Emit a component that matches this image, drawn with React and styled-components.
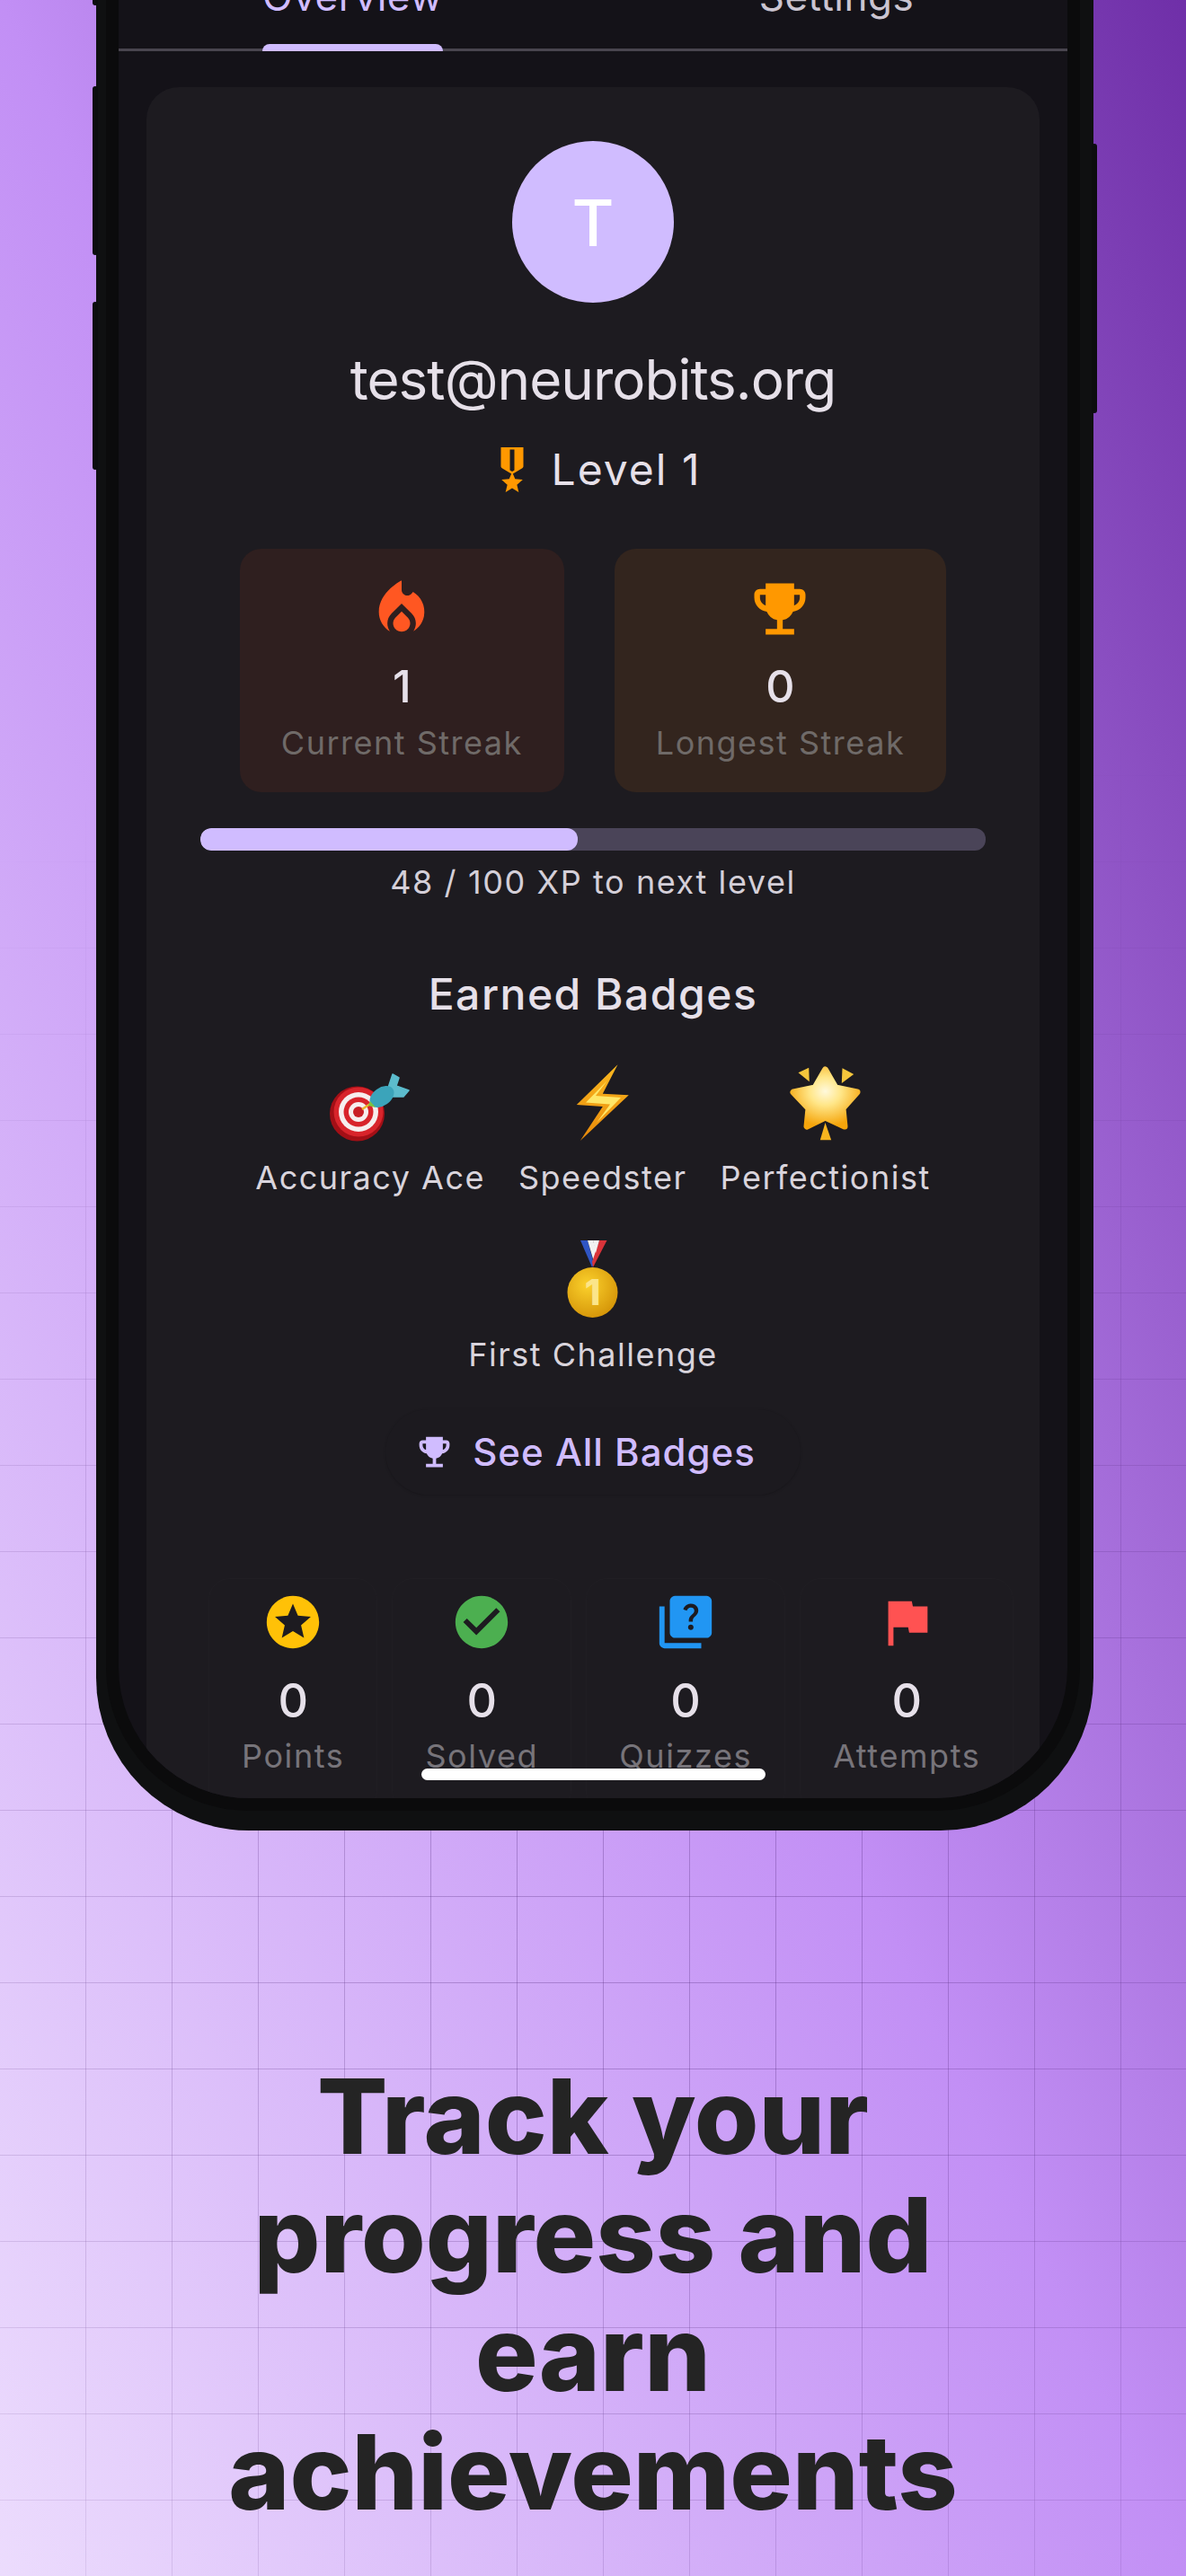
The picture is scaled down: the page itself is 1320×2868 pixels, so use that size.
import React from "react";
import styled, { createGlobalStyle } from "styled-components";
import {
  MdCheckCircle,
  MdEmojiEvents,
  MdFlag,
  MdLocalFireDepartment,
  MdMilitaryTech,
  MdQuiz,
  MdStars,
} from "react-icons/md";

const GlobalStyle = createGlobalStyle`
  html, body {
    margin: 0;
    padding: 0;
  }
  body {
    font-family: Inter, "Liberation Sans", sans-serif;
  }
`;

function TargetEmoji() {
  return (
    <svg width="90" height="90" viewBox="0 0 90 90">
      <circle cx="30.5" cy="56" r="30.5" fill="#a30f16" />
      <circle cx="32" cy="54" r="27.5" fill="#d8242b" />
      <circle cx="32" cy="54" r="22" fill="#f6eeee" />
      <circle cx="32" cy="54" r="16.5" fill="#d8242b" />
      <circle cx="32" cy="54" r="11" fill="#f6eeee" />
      <circle cx="32" cy="54" r="6" fill="#c81e25" />
      <path d="M36 51 L48 43" stroke="#e8b52c" strokeWidth="2.5" />
      <path
        d="M64 30 L70 12 L77 16 L74 25 L88 30 L82 37 L68 37 Z"
        fill="#5cbccd"
        stroke="#5cbccd"
        strokeWidth="1.5"
        strokeLinejoin="round"
      />
      <ellipse
        cx="58"
        cy="37"
        rx="15"
        ry="10"
        transform="rotate(-36 58 37)"
        fill="#3ba4ba"
      />
      <path d="M45 42 L51 49 L43 47 Z" fill="#7fc241" />
    </svg>
  );
}

function BoltEmoji() {
  return (
    <svg width="90" height="90" viewBox="0 0 90 90">
      <defs>
        <linearGradient id="boltEdge" x1="0" y1="0" x2="0" y2="1">
          <stop offset="0" stopColor="#f9b820" />
          <stop offset="1" stopColor="#e98a0a" />
        </linearGradient>
      </defs>
      <path
        d="M61.5 1.3 L15.8 46 L44.8 48 L19.8 86 L73.8 35.3 L44.8 33.7 Z"
        fill="url(#boltEdge)"
      />
      <path
        d="M50 19 L26 43.5 L53 45.5 L38 66 L65 38 L37 36 Z"
        fill="#ffe768"
      />
    </svg>
  );
}

function StarEmoji() {
  return (
    <svg width="90" height="90" viewBox="0 0 90 90">
      <defs>
        <radialGradient id="starFill" cx="0.5" cy="0.38" r="0.62">
          <stop offset="0" stopColor="#fff9dc" />
          <stop offset="0.4" stopColor="#ffe688" />
          <stop offset="1" stopColor="#f5a50c" />
        </radialGradient>
      </defs>
      <path
        d="M44.5 7 L56 27 L80 32 L64 50 L66 70 L44.5 60 L24 70 L26 50 L9 32 L33 27 Z"
        fill="url(#starFill)"
        stroke="url(#starFill)"
        strokeWidth="7"
        strokeLinejoin="round"
      />
      <path d="M14.5 10.3 L26.2 4.7 L26.8 20.3 Z" fill="#f5c63c" />
      <path d="M63.5 5.3 L76.2 12 L62.8 22 Z" fill="#f5c63c" />
      <path d="M44.5 66 L51.2 85.3 L38.8 85.3 Z" fill="#f7b41f" />
    </svg>
  );
}

function MedalEmoji() {
  return (
    <svg width="90" height="90" viewBox="0 0 90 90">
      <defs>
        <radialGradient id="medalGold" cx="0.4" cy="0.35" r="0.75">
          <stop offset="0" stopColor="#fbd12c" />
          <stop offset="1" stopColor="#d18f05" />
        </radialGradient>
      </defs>
      <path d="M31 0 L39 0 L46 26 L44 30 Z" fill="#2f55c4" />
      <path d="M39 0 L45 0 L50 16 L46 24 Z" fill="#f2f2f2" />
      <path d="M52 0 L60.5 0 L45 30 L44 24 Z" fill="#d9333a" />
      <path d="M45 0 L52 0 L48 14 Z" fill="#f2f2f2" />
      <circle cx="44.5" cy="58" r="28" fill="url(#medalGold)" />
      <text
        x="44.5"
        y="72"
        textAnchor="middle"
        fontFamily="Inter, sans-serif"
        fontWeight="800"
        fontSize="40"
        fill="#fbe58a"
      >
        1
      </text>
    </svg>
  );
}

const streaks = [
  { icon: MdLocalFireDepartment, color: "#ff5722", bg: "#2f1f1f", value: 1, label: "Current Streak" },
  { icon: MdEmojiEvents, color: "#ff9800", bg: "#33251e", value: 0, label: "Longest Streak" },
];

const badges = [
  { emoji: TargetEmoji, label: "Accuracy Ace" },
  { emoji: BoltEmoji, label: "Speedster" },
  { emoji: StarEmoji, label: "Perfectionist" },
  { emoji: MedalEmoji, label: "First Challenge" },
];

const stats = [
  { icon: MdStars, color: "#ffc107", label: "Points" },
  { icon: MdCheckCircle, color: "#4caf50", label: "Solved" },
  { icon: MdQuiz, color: "#2196f3", label: "Quizzes" },
  { icon: MdFlag, color: "#ff5252", label: "Attempts" },
];

const xp = 48;

export default function App() {
  return (
    <Page>
      <GlobalStyle />
      <Phone>
        <SideButton $side="left" $top={-20} $height={26} />
        <SideButton $side="left" $top={96} $height={188} />
        <SideButton $side="left" $top={336} $height={187} />
        <SideButton $side="right" $top={160} $height={300} />
        <Screen>
          <TabBar>
            <Tab $active>Overview</Tab>
            <Tab>Settings</Tab>
          </TabBar>
          <ProfileCard>
            <Avatar>T</Avatar>
            <Email>test@neurobits.org</Email>
            <LevelRow>
              <MdMilitaryTech size={60} color="#ff9800" />
              <LevelText>Level 1</LevelText>
            </LevelRow>
            <StreakRow>
              {streaks.map((s) => (
                <StreakCard key={s.label} $bg={s.bg}>
                  <s.icon size={76} color={s.color} />
                  <StreakValue>{s.value}</StreakValue>
                  <StreakLabel>{s.label}</StreakLabel>
                </StreakCard>
              ))}
            </StreakRow>
            <ProgressTrack>
              <ProgressFill style={{ width: `${xp}%` }} />
            </ProgressTrack>
            <XpText>{xp} / 100 XP to next level</XpText>
            <BadgesTitle>Earned Badges</BadgesTitle>
            <BadgeGrid>
              {badges.map((b) => (
                <Badge key={b.label}>
                  <b.emoji />
                  <BadgeLabel>{b.label}</BadgeLabel>
                </Badge>
              ))}
            </BadgeGrid>
            <SeeAllButton>
              <MdEmojiEvents size={45} />
              See All Badges
            </SeeAllButton>
            <StatsRow>
              {stats.map((s) => (
                <StatCell key={s.label}>
                  <s.icon size={70} color={s.color} />
                  <StatValue>0</StatValue>
                  <StatLabel>{s.label}</StatLabel>
                </StatCell>
              ))}
            </StatsRow>
          </ProfileCard>
          <HomeIndicator />
        </Screen>
      </Phone>
      <Headline>Track your progress and earn achievements</Headline>
    </Page>
  );
}

const Page = styled.div`
  position: relative;
  width: 1320px;
  height: 2868px;
  overflow: hidden;
  display: flex;
  flex-direction: column;
  background: linear-gradient(to top right, #ecdcfd 0%, #c28ff5 50%, #6f2fa8 100%);

  &::before {
    content: "";
    position: absolute;
    inset: 0;
    background-image:
      linear-gradient(to bottom, transparent 95px, rgba(70, 30, 110, 0.28) 95px, rgba(70, 30, 110, 0.28) 96px),
      linear-gradient(to right, transparent 95px, rgba(70, 30, 110, 0.28) 95px, rgba(70, 30, 110, 0.28) 96px);
    background-size: 96px 96px;
    mask-image: radial-gradient(circle at 56% 74%, black 10%, transparent 62%);
  }
`;

const Phone = styled.div`
  position: relative;
  flex: none;
  box-sizing: border-box;
  width: 1110px;
  height: 2038px;
  margin-left: 107px;
  padding: 0 29px 36px 25px;
  background: #0f1011;
  border-radius: 0 0 170px 170px;
`;

const SideButton = styled.div`
  position: absolute;
  ${(p) => (p.$side === "left" ? "left: -4px;" : "right: -4px;")}
  top: ${(p) => p.$top}px;
  width: 6px;
  height: ${(p) => p.$height}px;
  background: #0c0d0e;
  border-radius: 3px;
`;

const Screen = styled.div`
  position: relative;
  height: 2002px;
  background: #141218;
  border-radius: 0 0 145px 145px;
  box-shadow: 0 0 0 14px #0b0b0c;
  overflow: hidden;
  display: flex;
  flex-direction: column;
`;

const TabBar = styled.div`
  box-sizing: border-box;
  flex: none;
  height: 57px;
  display: flex;
  gap: 352px;
  padding-left: 160px;
  border-bottom: 3px solid #49454f;
`;

const Tab = styled.div`
  position: relative;
  height: 57px;
  margin-top: -34px;
  font-size: 44px;
  line-height: 60px;
  letter-spacing: 0.5px;
  text-align: center;
  color: ${(p) => (p.$active ? "#d0bcff" : "#cac4d0")};

  ${(p) =>
    p.$active &&
    `
    &::after {
      content: "";
      position: absolute;
      left: 0;
      right: 0;
      bottom: -34px;
      height: 8px;
      border-radius: 8px 8px 0 0;
      background: #d0bcff;
    }
  `}
`;

const ProfileCard = styled.div`
  flex: none;
  margin: 40px 31px 0;
  padding: 60px 0 100px;
  background: #1d1b20;
  border-radius: 36px 36px 0 0;
  display: flex;
  flex-direction: column;
  align-items: center;
`;

const Avatar = styled.div`
  width: 180px;
  height: 180px;
  border-radius: 50%;
  background: #d0bcff;
  color: #fff;
  font-size: 72px;
  font-weight: 500;
  display: flex;
  align-items: center;
  justify-content: center;
`;

const Email = styled.div`
  margin-top: 48px;
  font-size: 62px;
  line-height: 76px;
  letter-spacing: -1px;
  color: #e6e0e9;
`;

const LevelRow = styled.div`
  margin-top: 32px;
  display: flex;
  align-items: center;
  gap: 14px;
`;

const LevelText = styled.span`
  font-size: 48px;
  line-height: 60px;
  letter-spacing: 2px;
  color: #e6e0e9;
`;

const StreakRow = styled.div`
  margin-top: 58px;
  display: flex;
  gap: 56px;
`;

const StreakCard = styled.div`
  padding: 29px 46px 31px;
  background: ${(p) => p.$bg};
  border-radius: 24px;
  display: flex;
  flex-direction: column;
  align-items: center;
`;

const StreakValue = styled.div`
  margin-top: 20px;
  font-size: 50px;
  line-height: 56px;
  font-weight: 500;
  color: #e6e0e9;
`;

const StreakLabel = styled.div`
  margin-top: 11px;
  font-size: 36px;
  line-height: 48px;
  letter-spacing: 1.5px;
  color: #6f6a68;
`;

const ProgressTrack = styled.div`
  margin-top: 40px;
  width: 874px;
  height: 25px;
  border-radius: 12px;
  background: #4a4458;
  overflow: hidden;
`;

const ProgressFill = styled.div`
  height: 100%;
  border-radius: 12px;
  background: #d0bcff;
`;

const XpText = styled.div`
  margin-top: 13px;
  font-size: 36px;
  line-height: 44px;
  letter-spacing: 1.6px;
  color: #d4cfd8;
`;

const BadgesTitle = styled.div`
  margin-top: 75px;
  font-size: 48px;
  line-height: 56px;
  font-weight: 500;
  letter-spacing: 1.5px;
  color: #e6e0e9;
`;

const BadgeGrid = styled.div`
  margin-top: 49px;
  width: 800px;
  display: flex;
  flex-wrap: wrap;
  justify-content: center;
  gap: 48px 37px;
`;

const Badge = styled.div`
  display: flex;
  flex-direction: column;
  align-items: center;
`;

const BadgeLabel = styled.div`
  margin-top: 15px;
  font-size: 36px;
  line-height: 44px;
  letter-spacing: 1.5px;
  color: #d9d4dc;
`;

const SeeAllButton = styled.div`
  margin-top: 39px;
  box-sizing: border-box;
  height: 95px;
  padding: 0 50px 0 32px;
  display: flex;
  align-items: center;
  gap: 20px;
  border-radius: 48px;
  background: #1c1a1f;
  box-shadow: 0 1px 3px rgba(0, 0, 0, 0.18);
  font-size: 42px;
  font-weight: 500;
  letter-spacing: 1px;
  color: #d0bcff;
`;

const StatsRow = styled.div`
  margin-top: 93px;
  align-self: flex-start;
  margin-left: 69px;
  display: flex;
  gap: 16px;
`;

const StatCell = styled.div`
  padding: 13px 36px 40px;
  border: 1px solid #201e23;
  border-radius: 24px;
  display: flex;
  flex-direction: column;
  align-items: center;
`;

const StatValue = styled.div`
  margin-top: 25px;
  font-size: 52px;
  line-height: 56px;
  font-weight: 500;
  color: #e6e0e9;
`;

const StatLabel = styled.div`
  margin-top: 11px;
  font-size: 36px;
  line-height: 44px;
  letter-spacing: 1.6px;
  color: #77747a;
`;

const HomeIndicator = styled.div`
  position: absolute;
  left: 337px;
  bottom: 20px;
  width: 383px;
  height: 13px;
  border-radius: 7px;
  background: #fff;
`;

const Headline = styled.h1`
  position: relative;
  align-self: center;
  max-width: 860px;
  margin: 252px 0 0;
  font-size: 116px;
  line-height: 132px;
  font-weight: 800;
  text-align: center;
  color: #242424;
`;
